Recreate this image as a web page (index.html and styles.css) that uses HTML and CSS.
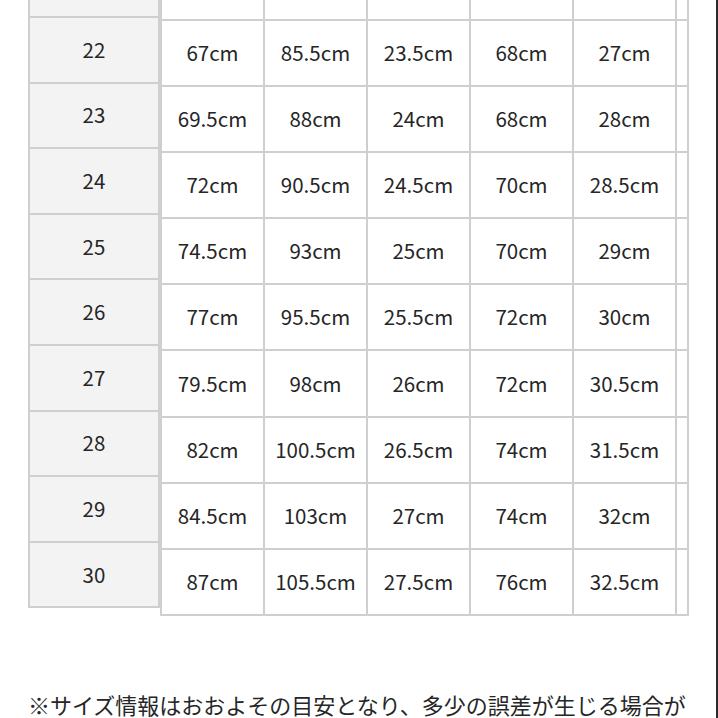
FILE: index.html
```html
<!DOCTYPE html>
<html lang="ja">
<head>
<meta charset="utf-8">
<link rel="stylesheet" href="styles.css">
</head>
<body>
<div class="frame">
  <div class="tables">
    <div class="sizes">
      <div class="scell first"></div>
      <div class="scell">22</div>
      <div class="scell">23</div>
      <div class="scell">24</div>
      <div class="scell">25</div>
      <div class="scell">26</div>
      <div class="scell">27</div>
      <div class="scell">28</div>
      <div class="scell">29</div>
      <div class="scell">30</div>
    </div>
    <div class="grid">
      <div class="c first"></div><div class="c first"></div><div class="c first"></div><div class="c first"></div><div class="c first"></div><div class="c first narrow"></div>
      <div class="c">67cm</div><div class="c">85.5cm</div><div class="c">23.5cm</div><div class="c">68cm</div><div class="c">27cm</div><div class="c narrow"></div>
      <div class="c">69.5cm</div><div class="c">88cm</div><div class="c">24cm</div><div class="c">68cm</div><div class="c">28cm</div><div class="c narrow"></div>
      <div class="c">72cm</div><div class="c">90.5cm</div><div class="c">24.5cm</div><div class="c">70cm</div><div class="c">28.5cm</div><div class="c narrow"></div>
      <div class="c">74.5cm</div><div class="c">93cm</div><div class="c">25cm</div><div class="c">70cm</div><div class="c">29cm</div><div class="c narrow"></div>
      <div class="c">77cm</div><div class="c">95.5cm</div><div class="c">25.5cm</div><div class="c">72cm</div><div class="c">30cm</div><div class="c narrow"></div>
      <div class="c">79.5cm</div><div class="c">98cm</div><div class="c">26cm</div><div class="c">72cm</div><div class="c">30.5cm</div><div class="c narrow"></div>
      <div class="c">82cm</div><div class="c">100.5cm</div><div class="c">26.5cm</div><div class="c">74cm</div><div class="c">31.5cm</div><div class="c narrow"></div>
      <div class="c">84.5cm</div><div class="c">103cm</div><div class="c">27cm</div><div class="c">74cm</div><div class="c">32cm</div><div class="c narrow"></div>
      <div class="c">87cm</div><div class="c">105.5cm</div><div class="c">27.5cm</div><div class="c">76cm</div><div class="c">32.5cm</div><div class="c narrow"></div>
    </div>
  </div>
  <p class="note">※サイズ情報はおおよその目安となり、多少の誤差が生じる場合が</p>
</div>
</body>
</html>
```
FILE: styles.css
```css
html, body {
  margin: 0;
  padding: 0;
  background: #ffffff;
}
body {
  width: 718px;
  height: 718px;
  overflow: hidden;
  font-family: "Noto Sans CJK JP", "Noto Sans", sans-serif;
  color: #262626;
}
.frame {
  box-sizing: border-box;
  width: 718px;
  height: 718px;
  border-right: 2px solid #2a2a2a;
  padding-left: 28px;
  overflow: hidden;
}
.tables {
  display: flex;
  align-items: flex-start;
}
.sizes {
  box-sizing: border-box;
  width: 132px;
  display: flex;
  flex-direction: column;
  background: #f3f3f3;
  border-left: 2px solid #cfcfcf;
  border-right: 2px solid #cfcfcf;
  border-bottom: 2px solid #cfcfcf;
}
.scell {
  box-sizing: border-box;
  height: 65.6px;
  border-top: 2px solid #cfcfcf;
  display: flex;
  align-items: center;
  justify-content: center;
  font-size: 20.5px;
  padding-bottom: 2px;
}
.scell.first {
  height: 16px;
  border-top: none;
}
.grid {
  box-sizing: border-box;
  display: grid;
  grid-template-columns: repeat(5, 103px) 12px;
  grid-template-rows: 19px repeat(9, 66.1px);
  border-right: 2px solid #cfcfcf;
  border-bottom: 2px solid #cfcfcf;
}
.c {
  box-sizing: border-box;
  border-left: 2px solid #cfcfcf;
  border-top: 2px solid #cfcfcf;
  display: flex;
  align-items: center;
  justify-content: center;
  font-size: 20.5px;
  padding-bottom: 2px;
  white-space: nowrap;
}
.c.first {
  border-top: none;
}
.note {
  margin: 72px 0 0 0;
  font-size: 22px;
  line-height: 32px;
  white-space: nowrap;
  letter-spacing: 0;
}
```
